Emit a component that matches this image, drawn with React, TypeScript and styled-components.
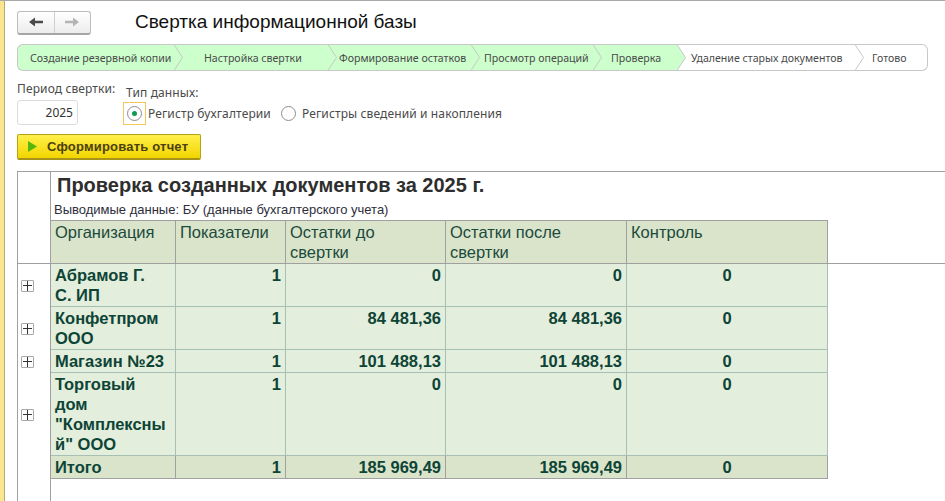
import React from 'react';
import styled, { createGlobalStyle } from 'styled-components';

const COLUMNS = '33px 125px 110px 160px 181px 201px';
const UI_FONT = '"Noto Sans", "Liberation Sans", sans-serif';
const TABLE_FONT = '"Liberation Sans", Arial, sans-serif';

const GlobalStyle = createGlobalStyle`
  html, body {
    margin: 0;
    padding: 0;
    width: 945px;
    height: 501px;
    overflow: hidden;
    background: #fff;
  }
`;

const Page = styled.div`
  width: 945px;
  height: 501px;
  box-sizing: border-box;
  display: flex;
  flex-direction: column;
  padding: 9px 0 0 17px;
  background: #fff;
  border-top: 1px solid #a9a9a9;
  position: relative;
  font-family: ${UI_FONT};
  overflow: hidden;

  &::before {
    content: '';
    position: absolute;
    left: 0;
    top: 0;
    bottom: 0;
    width: 4px;
    background: #fbe690;
    border-right: 1px solid #b5ab78;
  }
`;

const TitleBar = styled.div`
  display: flex;
  align-items: center;
  height: 25px;
`;

const NavGroup = styled.div`
  display: flex;
  width: 74px;
  height: 24px;
  box-sizing: border-box;
  border: 1px solid #bdbdbd;
  border-bottom: 2px solid #a5a5a5;
  border-radius: 3px;
  background: linear-gradient(#ffffff, #ececec);
`;

const NavButton = styled.div<{ $divider?: boolean }>`
  flex: 1;
  display: flex;
  align-items: center;
  justify-content: center;
  border-right: ${({ $divider }) => ($divider ? '1px solid #cfcfcf' : 'none')};
`;

const Title = styled.h1`
  margin: 0 0 2px 44px;
  font-family: ${TABLE_FONT};
  font-size: 19px;
  font-weight: 400;
  color: #111;
`;

const Steps = styled.div`
  display: flex;
  width: 911px;
  height: 27px;
  margin-top: 9px;
`;

const Step = styled.div<{ $done: boolean; $width: number; $first?: boolean; $last?: boolean; $indent: number }>`
  position: relative;
  box-sizing: border-box;
  width: ${({ $width }) => $width}px;
  height: 27px;
  padding-left: ${({ $indent }) => $indent}px;
  display: flex;
  align-items: center;
  white-space: nowrap;
  font-size: 10.6px;
  color: #4a4a4a;
  background: ${({ $done }) => ($done ? '#ccffcc' : '#fff')};
  border-top: 1px solid #c8c8c8;
  border-bottom: 1px solid #c8c8c8;
  border-left: ${({ $first }) => ($first ? '1px solid #c8c8c8' : 'none')};
  border-right: ${({ $last }) => ($last ? '1px solid #c8c8c8' : 'none')};
  border-radius: ${({ $first, $last }) => ($first ? '6px 0 0 6px' : $last ? '0 6px 6px 0' : '0')};
`;

const Chevron = styled.svg`
  position: absolute;
  top: -1px;
  left: 100%;
  width: 9px;
  height: 27px;
  z-index: 1;
`;

const Params = styled.div`
  display: flex;
  align-items: flex-start;
  margin-top: 9px;
`;

const Field = styled.div`
  display: flex;
  flex-direction: column;
  width: 109px;
`;

const FieldLabel = styled.div`
  height: 18px;
  line-height: 18px;
  font-size: 12px;
  letter-spacing: 0.12px;
  color: #4a4a4a;
  white-space: nowrap;
`;

const YearInput = styled.div`
  box-sizing: border-box;
  width: 61px;
  height: 25px;
  margin-top: 2px;
  padding-right: 4px;
  line-height: 23px;
  text-align: right;
  font-size: 12px;
  color: #333;
  border: 1px solid #dcdcdc;
  border-radius: 3px;
`;

const DataType = styled.div`
  display: flex;
  flex-direction: column;
  margin-top: 4px;
`;

const RadioRow = styled.div`
  display: flex;
  align-items: center;
  height: 23px;
  margin-left: -3px;
`;

const RadioHit = styled.div<{ $focused?: boolean }>`
  box-sizing: border-box;
  width: 23px;
  height: 23px;
  display: flex;
  align-items: center;
  justify-content: center;
  border: 1px solid ${({ $focused }) => ($focused ? '#f3c75a' : 'transparent')};
`;

const RadioCircle = styled.div`
  box-sizing: border-box;
  width: 15px;
  height: 15px;
  border-radius: 50%;
  border: 1px solid #8e8e8e;
  background: #fff;
  display: flex;
  align-items: center;
  justify-content: center;
`;

const RadioDot = styled.div`
  width: 5px;
  height: 5px;
  border-radius: 50%;
  background: #0f9a50;
`;

const RadioLabel = styled.span<{ $gap: number }>`
  font-size: 12px;
  letter-spacing: 0.12px;
  color: #4a4a4a;
  margin: 0 ${({ $gap }) => $gap}px 0 2px;
  white-space: nowrap;
`;

const ActionButton = styled.div`
  box-sizing: border-box;
  width: 184px;
  height: 26px;
  margin-top: 9px;
  display: flex;
  align-items: center;
  gap: 10px;
  padding-left: 10px;
  border: 1px solid #b8a11a;
  border-bottom: 2px solid #a8931a;
  border-radius: 2px;
  background: linear-gradient(#fff04a, #f2d500);
  font-family: ${TABLE_FONT};
  font-size: 13px;
  font-weight: 700;
  letter-spacing: 0.2px;
  color: #4b4210;
`;

const Report = styled.div`
  flex: 1;
  margin-top: 11px;
  display: flex;
  flex-direction: column;
  border-top: 1px solid #a0a0a0;
  border-left: 1px solid #a0a0a0;
  font-family: ${TABLE_FONT};
`;

const ReportHead = styled.div`
  display: flex;
  height: 92px;
  flex: none;
  box-sizing: border-box;
  border-bottom: 1px solid #a0a0a0;
`;

const Gutter = styled.div`
  flex: none;
  width: 32px;
  border-right: 1px solid #a0a0a0;
`;

const HeadContent = styled.div`
  display: flex;
  flex-direction: column;
`;

const ReportTitle = styled.div`
  height: 28px;
  padding-left: 6px;
  box-sizing: border-box;
  line-height: 26px;
  font-size: 20px;
  font-weight: 700;
  color: #2e2e2e;
`;

const ReportSubtitle = styled.div`
  height: 20px;
  padding-left: 3px;
  line-height: 19px;
  font-size: 13px;
  color: #2e2e3a;
`;

const HeaderRow = styled.div`
  display: grid;
  grid-template-columns: 125px 110px 160px 181px 201px;
  height: 43px;
  flex: none;
`;

const HeaderCell = styled.div`
  box-sizing: border-box;
  padding: 1px 4px 0;
  line-height: 20px;
  font-size: 16.5px;
  white-space: pre-line;
  color: #1c4a3c;
  background: #d9e4cb;
  border-top: 1px solid #a0a0a0;
  border-right: 1px solid #a0a0a0;
`;

const ReportBody = styled.div`
  flex: 1;
  display: flex;
  flex-direction: column;
  position: relative;

  &::after {
    content: '';
    flex: 1;
    width: 32px;
    border-right: 1px solid #a0a0a0;
  }
`;

const Row = styled.div<{ $height: number }>`
  display: grid;
  grid-template-columns: ${COLUMNS};
  height: ${({ $height }) => $height}px;
  flex: none;
`;

const ToggleCell = styled.div`
  box-sizing: border-box;
  display: flex;
  align-items: center;
  padding-left: 3px;
  border-right: 1px solid #a0a0a0;
`;

const Toggle = styled.div`
  position: relative;
  box-sizing: border-box;
  width: 13px;
  height: 12px;
  background: #fff;
  border: 1px solid #a8a8a8;
  border-radius: 1px;

  &::before,
  &::after {
    content: '';
    position: absolute;
    background: #333;
  }
  &::before {
    left: 1px;
    right: 1px;
    top: 4px;
    height: 1px;
  }
  &::after {
    top: 0;
    bottom: 0;
    left: 5px;
    width: 1px;
  }
`;

const Cell = styled.div<{ $total?: boolean; $align?: string }>`
  box-sizing: border-box;
  padding: 1px 4px 0;
  line-height: 20px;
  font-size: 16.5px;
  font-weight: 700;
  white-space: pre-line;
  color: #0d4436;
  text-align: ${({ $align }) => $align || 'left'};
  background: ${({ $total }) => ($total ? '#d9e4cb' : '#e4eedd')};
  border-right: 1px solid ${({ $total }) => ($total ? '#a0a0a0' : '#a8c0b4')};
  border-bottom: 1px solid ${({ $total }) => ($total ? '#a0a0a0' : '#a8c0b4')};
`;

type ReportRow = {
  org: string;
  count: string;
  before: string;
  after: string;
  control: string;
  height: number;
  total?: boolean;
};

const ROWS: ReportRow[] = [
  { org: 'Абрамов Г.\nС. ИП', count: '1', before: '0', after: '0', control: '0', height: 43 },
  { org: 'Конфетпром\nООО', count: '1', before: '84 481,36', after: '84 481,36', control: '0', height: 43 },
  { org: 'Магазин №23', count: '1', before: '101 488,13', after: '101 488,13', control: '0', height: 23 },
  { org: 'Торговый\nдом\n"Комплексны\nй" ООО', count: '1', before: '0', after: '0', control: '0', height: 83 },
  { org: 'Итого', count: '1', before: '185 969,49', after: '185 969,49', control: '0', height: 23, total: true },
];

const STEPS = [
  { label: 'Создание резервной копии', width: 157, indent: 12, done: true },
  { label: 'Настройка свертки', width: 154, indent: 30, done: true },
  { label: 'Формирование остатков', width: 143, indent: 11, done: true },
  { label: 'Просмотр операций', width: 122, indent: 13, done: true },
  { label: 'Проверка', width: 84, indent: 18, done: true },
  { label: 'Удаление старых документов', width: 178, indent: 14, done: false },
  { label: 'Готово', width: 73, indent: 17, done: false },
];

export default function App() {
  return (
    <Page>
      <GlobalStyle />
      <TitleBar>
        <NavGroup>
          <NavButton $divider>
            <svg width="16" height="12" viewBox="0 0 16 12">
              <path d="M1 6 L7 1.5 V4.8 H15 V7.2 H7 V10.5 Z" fill="#4a4a4a" />
            </svg>
          </NavButton>
          <NavButton>
            <svg width="16" height="12" viewBox="0 0 16 12">
              <path d="M15 6 L9 1.5 V4.8 H1 V7.2 H9 V10.5 Z" fill="#b4b4b4" />
            </svg>
          </NavButton>
        </NavGroup>
        <Title>Свертка информационной базы</Title>
      </TitleBar>

      <Steps>
        {STEPS.map((step, i) => (
          <Step
            key={step.label}
            $done={step.done}
            $width={step.width}
            $indent={step.indent}
            $first={i === 0}
            $last={i === STEPS.length - 1}
          >
            {step.label}
            {i < STEPS.length - 1 && (
              <Chevron viewBox="0 0 9 27">
                <path d="M0 0.5 L8.5 13.5 L0 26.5 Z" fill={step.done ? '#ccffcc' : '#fff'} />
                <path d="M0 0.5 L8.5 13.5 L0 26.5" fill="none" stroke="#c8c8c8" />
              </Chevron>
            )}
          </Step>
        ))}
      </Steps>

      <Params>
        <Field>
          <FieldLabel>Период свертки:</FieldLabel>
          <YearInput>2025</YearInput>
        </Field>
        <DataType>
          <FieldLabel>Тип данных:</FieldLabel>
          <RadioRow>
            <RadioHit $focused>
              <RadioCircle>
                <RadioDot />
              </RadioCircle>
            </RadioHit>
            <RadioLabel $gap={6}>Регистр бухгалтерии</RadioLabel>
            <RadioHit>
              <RadioCircle />
            </RadioHit>
            <RadioLabel $gap={0}>Регистры сведений и накопления</RadioLabel>
          </RadioRow>
        </DataType>
      </Params>

      <ActionButton>
        <svg width="9" height="11" viewBox="0 0 9 11">
          <path d="M0 0 L9 5.5 L0 11 Z" fill="#55b70e" />
        </svg>
        Сформировать отчет
      </ActionButton>

      <Report>
        <ReportHead>
          <Gutter />
          <HeadContent>
            <ReportTitle>Проверка созданных документов за 2025 г.</ReportTitle>
            <ReportSubtitle>Выводимые данные: БУ (данные бухгалтерского учета)</ReportSubtitle>
            <HeaderRow>
              <HeaderCell>Организация</HeaderCell>
              <HeaderCell>Показатели</HeaderCell>
              <HeaderCell>{'Остатки до\nсвертки'}</HeaderCell>
              <HeaderCell>{'Остатки после\nсвертки'}</HeaderCell>
              <HeaderCell>Контроль</HeaderCell>
            </HeaderRow>
          </HeadContent>
        </ReportHead>
        <ReportBody>
          {ROWS.map((row) => (
            <Row key={row.org} $height={row.height}>
              <ToggleCell>{!row.total && <Toggle />}</ToggleCell>
              <Cell $total={row.total}>{row.org}</Cell>
              <Cell $total={row.total} $align="right">{row.count}</Cell>
              <Cell $total={row.total} $align="right">{row.before}</Cell>
              <Cell $total={row.total} $align="right">{row.after}</Cell>
              <Cell $total={row.total} $align="center">{row.control}</Cell>
            </Row>
          ))}
        </ReportBody>
      </Report>
    </Page>
  );
}
